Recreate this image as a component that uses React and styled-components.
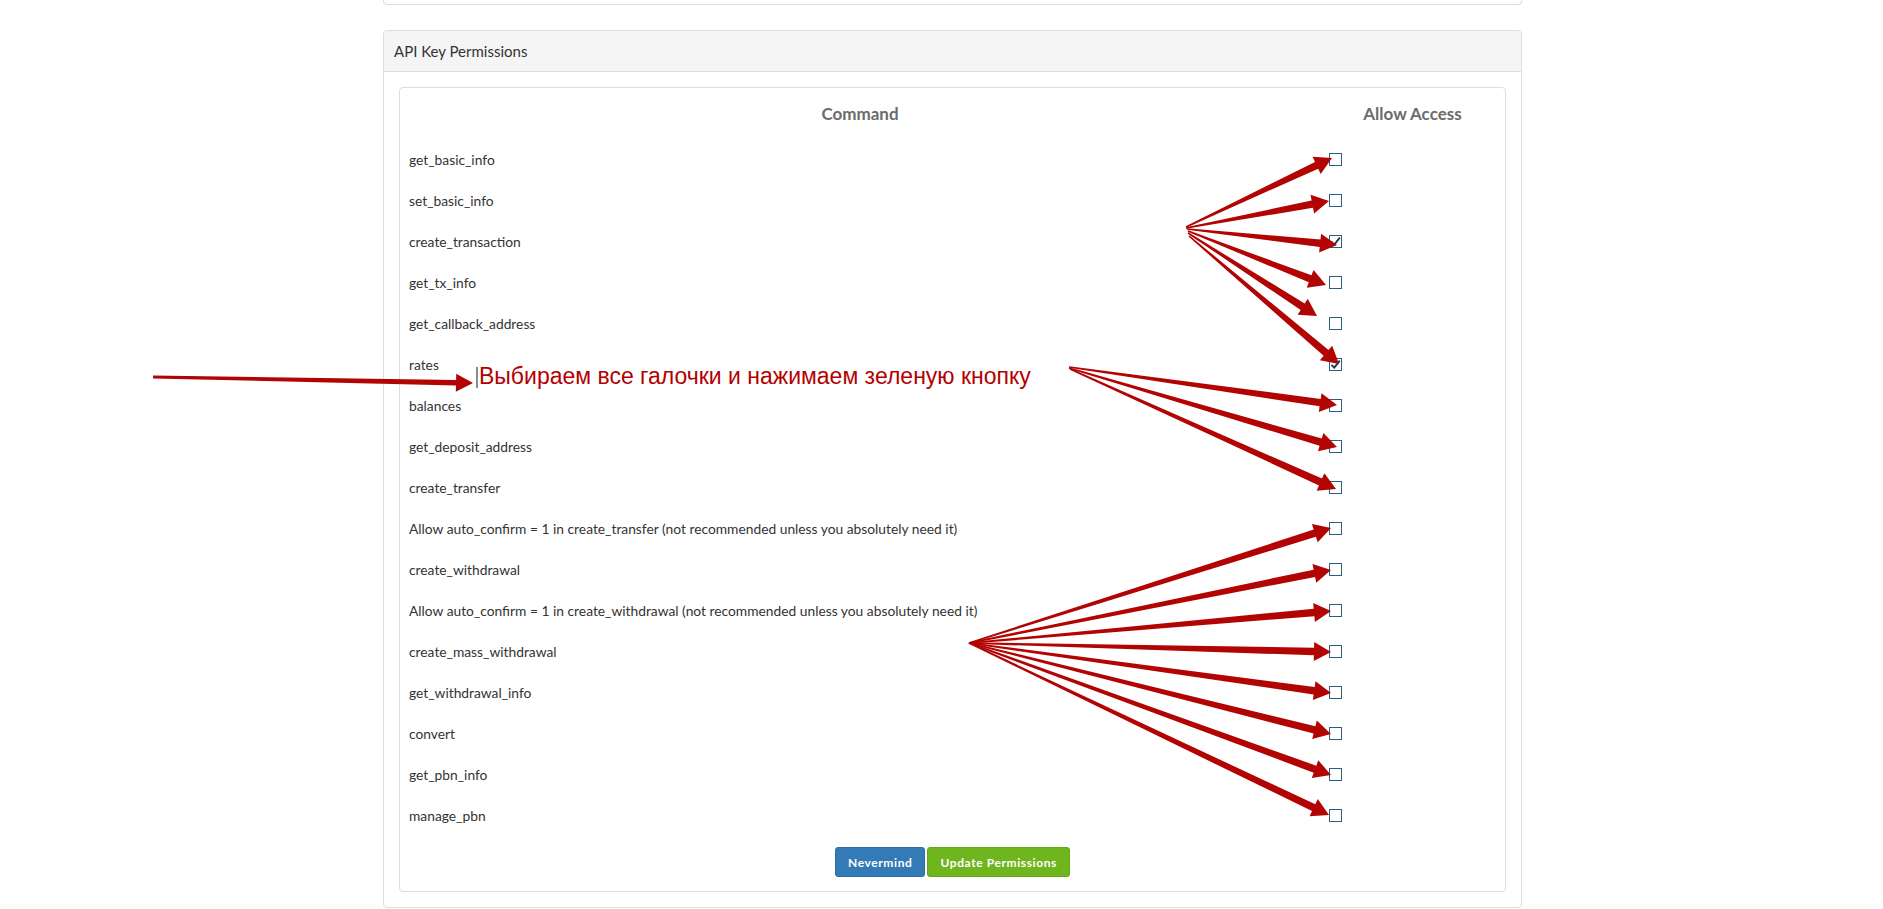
import React from 'react';
import styled, { createGlobalStyle } from 'styled-components';

const GlobalStyle = createGlobalStyle`
  html, body {
    margin: 0;
    padding: 0;
    background: #ffffff;
  }
  body {
    font-family: Lato, "Open Sans", sans-serif;
    color: #333333;
  }
`;

const commands = [
  { name: 'get_basic_info' },
  { name: 'set_basic_info' },
  { name: 'create_transaction', checked: true },
  { name: 'get_tx_info' },
  { name: 'get_callback_address' },
  { name: 'rates', checked: true },
  { name: 'balances' },
  { name: 'get_deposit_address' },
  { name: 'create_transfer' },
  { name: 'Allow auto_confirm = 1 in create_transfer (not recommended unless you absolutely need it)' },
  { name: 'create_withdrawal' },
  { name: 'Allow auto_confirm = 1 in create_withdrawal (not recommended unless you absolutely need it)' },
  { name: 'create_mass_withdrawal' },
  { name: 'get_withdrawal_info' },
  { name: 'convert' },
  { name: 'get_pbn_info' },
  { name: 'manage_pbn' },
];

// checkbox centres, used by the red annotation arrows
const boxY = (i) => 160 + i * 41;

const arrows = [
  // group pointing at the first six boxes
  [1186, 227, 1332, 158],
  [1186, 228, 1329, 201],
  [1187, 229, 1337, 245],
  [1188, 231, 1326, 285],
  [1188, 233, 1317, 316],
  [1189, 236, 1339, 364],
  // second group
  [1069, 367, 1337, boxY(6) - 1],
  [1069, 368, 1337, boxY(7)],
  [1070, 369, 1336, boxY(8) + 1],
  // third group
  [969, 643, 1331, boxY(9) - 1],
  [969, 643, 1331, boxY(10)],
  [969, 643, 1331, boxY(11)],
  [969, 643, 1331, boxY(12)],
  [969, 643, 1331, boxY(13)],
  [969, 643, 1331, boxY(14)],
  [969, 643, 1331, boxY(15)],
  [969, 643, 1329, boxY(16) - 1],
  // lone arrow from the left margin
  [153, 377, 473, 383, 3, 5.5, 17, 9],
];

function arrowPoints([x0, y0, x1, y1, w0 = 1.6, w1 = 7.5, len = 17, head = 9.5]) {
  const dx = x1 - x0;
  const dy = y1 - y0;
  const d = Math.hypot(dx, dy);
  const ux = dx / d;
  const uy = dy / d;
  const nx = -uy;
  const ny = ux;
  const bx = x1 - ux * len;
  const by = y1 - uy * len;
  const pts = [
    [x0 + (nx * w0) / 2, y0 + (ny * w0) / 2],
    [bx + (nx * w1) / 2, by + (ny * w1) / 2],
    [bx + nx * head, by + ny * head],
    [x1, y1],
    [bx - nx * head, by - ny * head],
    [bx - (nx * w1) / 2, by - (ny * w1) / 2],
    [x0 - (nx * w0) / 2, y0 - (ny * w0) / 2],
  ];
  return pts.map((p) => p.map((v) => v.toFixed(1)).join(',')).join(' ');
}

const Checkbox = ({ checked }) => (
  <Box>
    {checked && (
      <svg width="11" height="11" viewBox="0 0 11 11">
        <path d="M1.5 5.8 L4.3 8.6 L9.8 1.6" fill="none" stroke="#1b3550" strokeWidth="1.8" />
      </svg>
    )}
  </Box>
);

export default function App() {
  return (
    <Page>
      <GlobalStyle />
      <Column>
        <PrevPanel />
        <Panel>
          <PanelHeading>API Key Permissions</PanelHeading>
          <PanelBody>
            <Well>
              <Table>
                <HeadCell>Command</HeadCell>
                <HeadCell>Allow Access</HeadCell>
                {commands.map((c) => (
                  <React.Fragment key={c.name}>
                    <Cell>{c.name}</Cell>
                    <Cell>
                      <Checkbox checked={c.checked} />
                    </Cell>
                  </React.Fragment>
                ))}
              </Table>
              <Actions>
                <Btn $variant="primary">Nevermind</Btn>
                <Btn $variant="success">Update Permissions</Btn>
              </Actions>
            </Well>
          </PanelBody>
        </Panel>
      </Column>

      <Annotation>
        <svg width="1883" height="909" viewBox="0 0 1883 909">
          {arrows.map((a, i) => (
            <polygon key={i} points={arrowPoints(a)} fill="#b30404" />
          ))}
          <line x1="477" y1="367" x2="477" y2="388" stroke="#666" strokeWidth="1.5" />
        </svg>
        <Note>Выбираем все галочки и нажимаем зеленую кнопку</Note>
      </Annotation>
    </Page>
  );
}

const Page = styled.div`
  position: relative;
  width: 1883px;
  height: 909px;
  overflow: hidden;
`;

const Column = styled.div`
  margin-left: 383px;
  width: 1139px;
`;

const PrevPanel = styled.div`
  height: 4px;
  border: 1px solid #dddddd;
  border-top: none;
  border-radius: 0 0 4px 4px;
  margin-bottom: 25px;
`;

const Panel = styled.div`
  border: 1px solid #dddddd;
  border-radius: 4px;
`;

const PanelHeading = styled.div`
  background: #f5f5f5;
  border-bottom: 1px solid #dddddd;
  border-radius: 3px 3px 0 0;
  padding: 10px 10px;
  font-size: 15px;
  line-height: 20px;
  color: #333333;
`;

const PanelBody = styled.div`
  padding: 15px;
`;

const Well = styled.div`
  border: 1px solid #dddddd;
  border-radius: 4px;
  padding-bottom: 14px;
`;

const Table = styled.div`
  display: grid;
  grid-template-columns: 920px 1fr;
  grid-template-rows: 51px;
  grid-auto-rows: 41px;
`;

const HeadCell = styled.div`
  display: flex;
  align-items: center;
  justify-content: center;
  padding-bottom: 1px;
  font-size: 17px;
  font-weight: 700;
  color: #6b6b6b;
`;

const Cell = styled.div`
  display: flex;
  align-items: center;
  padding: 0 9px;
  font-size: 13.8px;
  color: #333333;
`;

const Box = styled.span`
  box-sizing: border-box;
  width: 13px;
  height: 13px;
  border: 1px solid #2f5e80;
  background: #ffffff;
  display: flex;
  align-items: center;
  justify-content: center;
`;

const Actions = styled.div`
  display: flex;
  justify-content: center;
  gap: 2px;
  margin-top: 11px;
`;

const Btn = styled.button`
  height: 30px;
  padding: 0 12px;
  border-radius: 3px;
  border: 1px solid ${(p) => (p.$variant === 'primary' ? '#2e6da4' : '#64a818')};
  background: ${(p) => (p.$variant === 'primary' ? '#337ab7' : '#6fb51d')};
  color: #ffffff;
  font-family: Lato, sans-serif;
  font-size: 12px;
  font-weight: 700;
  letter-spacing: 0.6px;
  cursor: pointer;
`;

const Annotation = styled.div`
  position: absolute;
  inset: 0;
  pointer-events: none;

  svg {
    position: absolute;
    left: 0;
    top: 0;
  }
`;

const Note = styled.div`
  position: absolute;
  left: 479px;
  top: 362px;
  font-family: "Liberation Sans", Arial, sans-serif;
  font-size: 23px;
  line-height: 28px;
  color: #b30000;
  white-space: nowrap;
`;
